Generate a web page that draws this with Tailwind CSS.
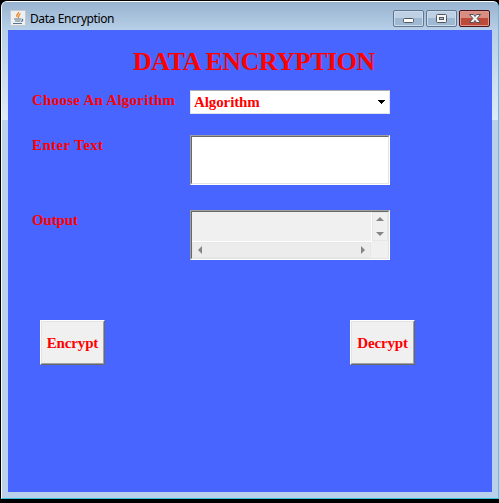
<!DOCTYPE html>
<html lang="en">
<head>
<meta charset="utf-8">
<title>Data Encryption</title>
<script src="https://cdn.jsdelivr.net/npm/@tailwindcss/browser@4"></script>
</head>
<body class="bg-white overflow-hidden">
<div class="w-[499px] h-[503px] bg-black pt-px pl-px pb-[4px]">
<main class="w-[498px] h-[498px] rounded-t-[6px] border-t border-l border-t-white border-l-[#f4f8fc] border-r border-b border-r-[#35d0f4] border-b-[#35c0dc] bg-[#b9d1ea] flex flex-col overflow-hidden">
  <header class="h-[28px] shrink-0 bg-linear-to-b from-[#98b3d0] to-[#b7cfe8] flex pl-[8px] pr-[8px]">
    <svg class="w-4 h-4 mt-[8px] shrink-0" viewBox="0 0 16 16">
      <rect x=".5" y=".5" width="15" height="15" rx="1" fill="#eef0f1" stroke="#c3cad0"/>
      <path d="M8.500 2c.5 2-3 2.500-1.500 5M10.500 3.500C8 5 9.500 6 8 8" fill="none" stroke="#ef8426" stroke-width="1.300"/>
      <path d="M4 9h7M5 11h5.500M3 13.500h9M11.500 9c2 0 1.500 2-.5 2.500" fill="none" stroke="#55768e" stroke-width="1.100"/>
    </svg>
    <h1 class="ml-[4px] mt-[9px] text-[12px] leading-[16px] font-['Noto_Sans',sans-serif] tracking-[-0.4px] text-black whitespace-nowrap">Data Encryption</h1>
    <div class="ml-auto mt-[8px] flex gap-[2px]">
      <button aria-label="Minimize" class="w-[31px] h-[17px] rounded-[2px] border border-[#62768e] bg-linear-to-b from-[#bdd0e4] from-50% to-[#9fb9d2] to-50% shadow-[inset_0_0_0_1px_#cbdcec]">
        <svg class="w-[29px] h-[15px]" viewBox="0 0 29 15"><rect x="9.500" y="7.500" width="10" height="4" rx="1" fill="#fff" stroke="#53555f"/></svg>
      </button>
      <button aria-label="Maximize" class="w-[31px] h-[17px] rounded-[2px] border border-[#62768e] bg-linear-to-b from-[#bdd0e4] from-50% to-[#9fb9d2] to-50% shadow-[inset_0_0_0_1px_#cbdcec]">
        <svg class="w-[29px] h-[15px]" viewBox="0 0 29 15"><rect x="9.500" y="3.500" width="10" height="8" rx="1" fill="#f4f4f4" stroke="#53555f"/><rect x="12.500" y="6.500" width="4" height="2" fill="#a9c3dc" stroke="#53555f"/></svg>
      </button>
      <button aria-label="Close" class="w-[31px] h-[17px] rounded-[2px] border border-[#4b1119] bg-linear-to-b from-[#d88d80] from-45% to-[#bd4938] to-50% shadow-[inset_0_0_0_1px_#dd9a8c]">
        <svg class="w-[29px] h-[15px]" viewBox="0 0 29 15"><path d="M9.500 3.500h4l1.500 2 1.500-2h4l-3.400 4 3.400 4h-4l-1.500-2-1.500 2h-4l3.400-4z" fill="#f2f2f2" stroke="#53555f"/></svg>
      </button>
    </div>
  </header>
  <div class="flex flex-1">
    <div class="w-[6px] h-[90px] bg-linear-to-b from-[#b7cfe8] to-[#deebf7]"></div>
    <section class="w-[484px] h-[462px] bg-[#4866ff] font-['Liberation_Serif',serif] font-bold text-[#ff0000]">
      <h2 class="pt-[17px] pl-[125px] text-[26px] leading-[30px] tracking-[-0.46px] whitespace-nowrap">DATA ENCRYPTION</h2>
      <div class="mt-[13px] ml-[24px] flex text-[15px] leading-[20px]">
        <div class="w-[158px] whitespace-nowrap"><span class="tracking-[0.26px]">Choose An Algorithm</span></div>
        <div class="w-[200px] h-[24px] border border-[#e1e4ea] border-t-[#abadb3] rounded-[1px] bg-white flex items-center pl-[3px] pr-[4px]">
          <span class="tracking-[-0.1px]">Algorithm</span>
          <svg class="ml-auto w-[8px] h-[4px]" viewBox="0 0 8 4" shape-rendering="crispEdges"><path d="M0 0h8L4 4z" fill="#000"/></svg>
        </div>
      </div>
      <div class="mt-[21px] ml-[24px] flex text-[15px] leading-[20px]">
        <div class="w-[158px]"><span class="tracking-[0.38px]">Enter Text</span></div>
        <div class="w-[200px] h-[50px] border border-[#a0a0a0] border-r-white border-b-white bg-white"><div class="w-full h-full border border-[#696969] border-r-[#e3e3e3] border-b-[#e3e3e3]"></div></div>
      </div>
      <div class="mt-[25px] ml-[24px] flex text-[15px] leading-[20px]">
        <div class="w-[158px]"><span class="tracking-[-0.15px]">Output</span></div>
        <div class="w-[200px] h-[50px] border border-[#a0a0a0] border-r-white border-b-white bg-[#f0f0f0]">
          <div class="w-full h-full border border-[#696969] border-r-[#e3e3e3] border-b-[#e3e3e3]">
            <div class="flex h-[30px]">
              <div class="w-[180px] border-r border-b border-white"></div>
              <div class="w-[16px] h-[29px] border border-[#e7e7e7] bg-[#f0f0f0] flex flex-col items-center justify-between pt-[4px] pb-[4px]">
                <svg class="w-[8px] h-[4px]" viewBox="0 0 8 4"><path d="M0 4h8L4 0z" fill="#858585"/></svg>
                <svg class="w-[8px] h-[4px]" viewBox="0 0 8 4"><path d="M0 0h8L4 4z" fill="#858585"/></svg>
              </div>
            </div>
            <div class="w-[179px] h-[16px] border border-[#e7e7e7] bg-[#ececec] flex items-center justify-between px-[5px]">
              <svg class="w-[4px] h-[8px]" viewBox="0 0 4 8"><path d="M4 0v8L0 4z" fill="#858585"/></svg>
              <svg class="w-[4px] h-[8px]" viewBox="0 0 4 8"><path d="M0 0v8l4-4z" fill="#858585"/></svg>
            </div>
          </div>
        </div>
      </div>
      <div class="mt-[60px] ml-[32px] w-[375px] flex justify-between text-[15px] leading-[17px] tracking-[-0.15px]">
        <button class="w-[65px] h-[45px] border border-white border-r-[#696969] border-b-[#696969] bg-[#f0f0f0]"><span class="w-full h-full border border-[#e3e3e3] border-r-[#a0a0a0] border-b-[#a0a0a0] flex items-center justify-center pt-[2px]">Encrypt</span></button>
        <button class="w-[65px] h-[45px] border border-white border-r-[#696969] border-b-[#696969] bg-[#f0f0f0]"><span class="w-full h-full border border-[#e3e3e3] border-r-[#a0a0a0] border-b-[#a0a0a0] flex items-center justify-center pt-[2px]">Decrypt</span></button>
      </div>
    </section>
    <div class="w-[6px] h-[90px] bg-linear-to-b from-[#b7cfe8] to-[#deebf7]"></div>
  </div>
</main>
</div>
</body>
</html>
